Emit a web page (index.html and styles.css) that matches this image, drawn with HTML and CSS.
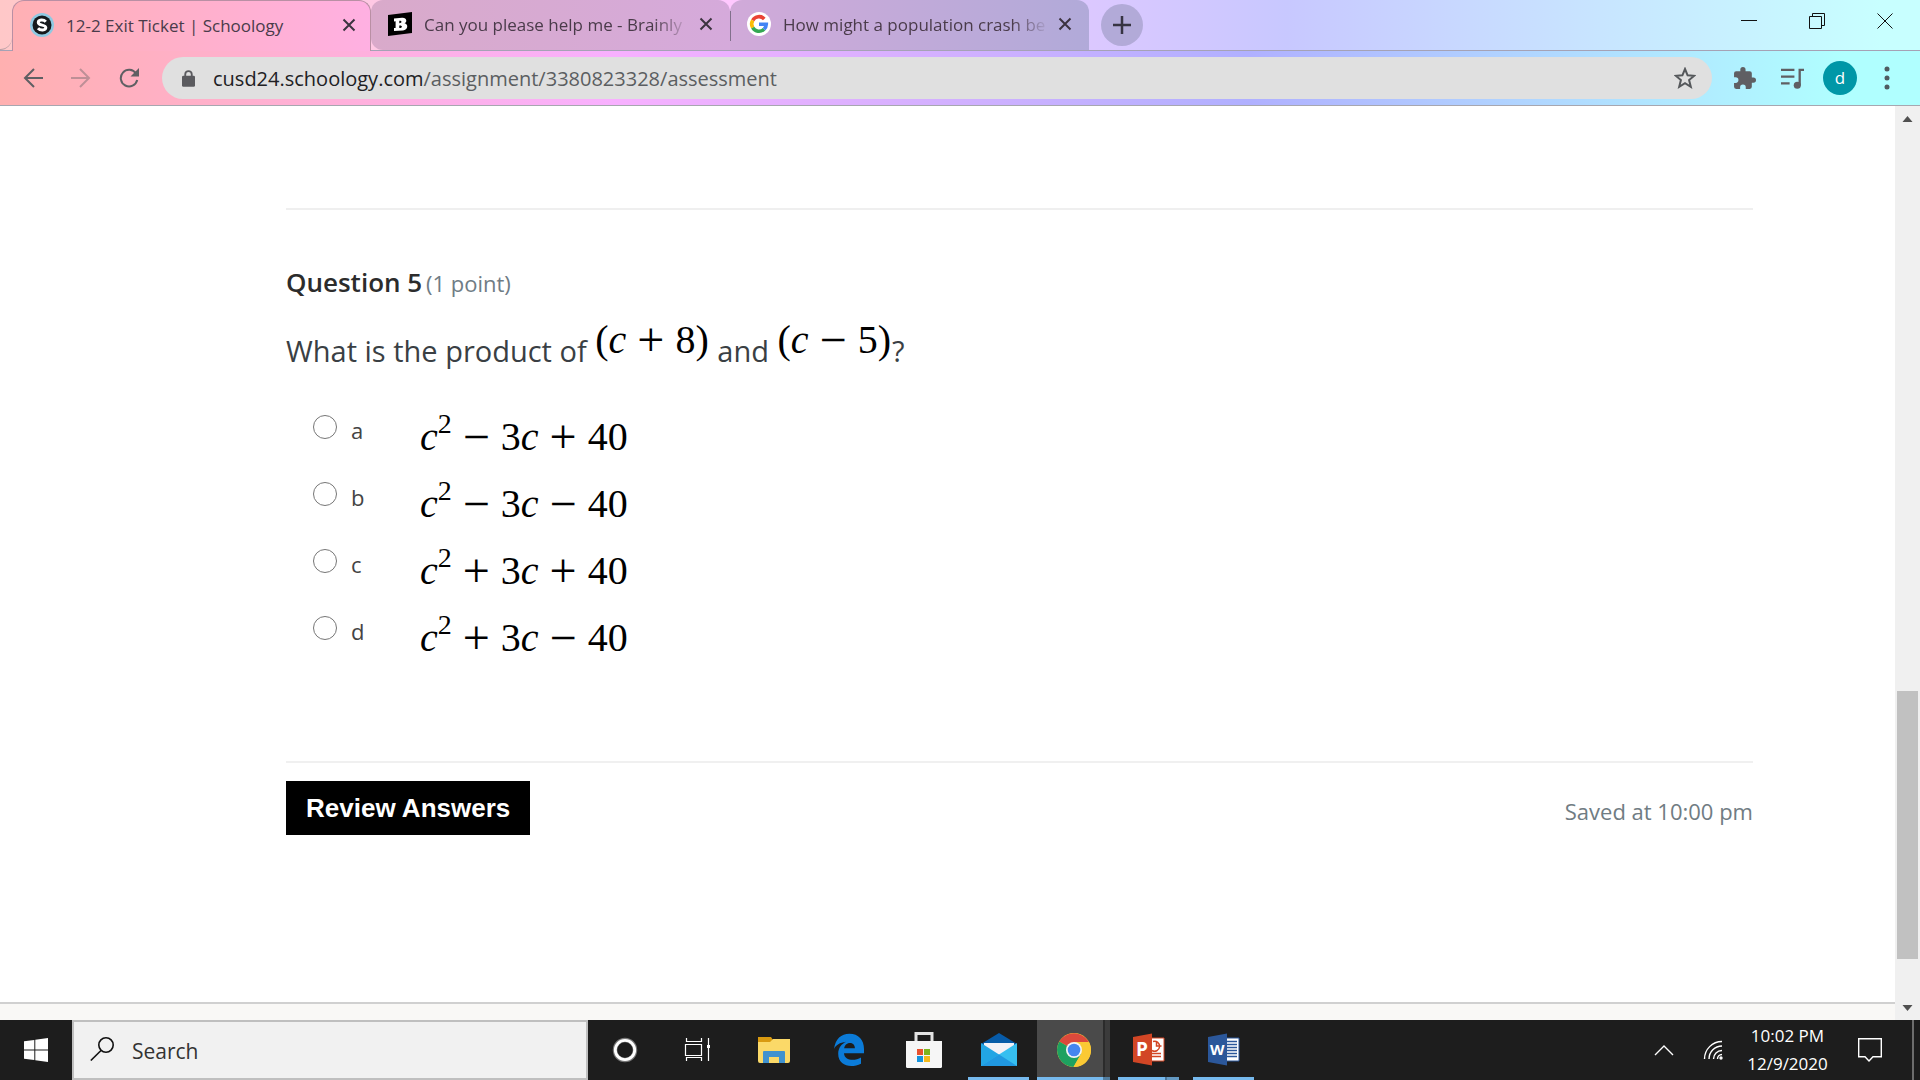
FILE: index.html
```html
<!DOCTYPE html>
<html lang="en">
<head>
<meta charset="utf-8">
<title>12-2 Exit Ticket | Schoology</title>
<link rel="stylesheet" href="styles.css">
</head>
<body>
<header class="browser">
  <div class="tab-strip">
    <div class="tab-edge"></div>
    <div class="tab tab-active">
      <svg class="favicon" viewBox="0 0 24 24"><circle cx="12" cy="12" r="12" fill="#8fc9e2"/><circle cx="12" cy="12" r="9.5" fill="#15191c"/><path d="M15.8 8.7C13.5 6.2 8.3 6.6 8.3 9.5c0 3.5 7.5 1.700 7.500 5.100 0 3-5.400 3.300-7.800.7" fill="none" stroke="#fff" stroke-width="3"/></svg>
      <span class="tab-title">12-2 Exit Ticket | Schoology</span>
      <button class="tab-close" aria-label="Close tab"><svg viewBox="0 0 14 14"><path d="M1.500 1.500l11 11m0-11l-11 11"/></svg></button>
    </div>
    <div class="tab tab-second">
      <svg class="favicon" viewBox="0 0 24 24"><path d="M0 3L24 0v21L0 24z" fill="#000"/><path fill-rule="evenodd" fill="#fff" d="M6 6.500l8-.8c5-.4 5.500 4.500 2.500 5.600 4.200.8 3.500 6.700-1.500 7.100l-9 .7v-3l1.600-.2V9.300L6 9.500zm5.300 2.300v2.400c2.700.1 3.200-2.700 0-2.400zm0 4.600v2.700c3.500 0 3.500-3 0-2.700z"/></svg>
      <span class="tab-title tab-fade">Can you please help me - Brainly</span>
      <button class="tab-close" aria-label="Close tab"><svg viewBox="0 0 14 14"><path d="M1.500 1.500l11 11m0-11l-11 11"/></svg></button>
    </div>
    <div class="tab tab-third">
      <svg class="favicon" viewBox="0 0 24 24"><circle cx="12" cy="12" r="12" fill="#fff"/><g fill="none" stroke-width="3.600"><path d="M17.300 6.900A7.300 7.300 0 0 0 5.700 8.300" stroke="#ea4335"/><path d="M5.700 8.300a7.300 7.300 0 0 0 0 7.400" stroke="#fbbc05"/><path d="M5.700 15.700a7.300 7.300 0 0 0 11.300 1.600" stroke="#34a853"/><path d="M17 17.300a7.300 7.300 0 0 0 2.300-5.100H12" stroke="#4285f4"/></g></svg>
      <span class="tab-title tab-fade">How might a population crash be</span>
      <button class="tab-close" aria-label="Close tab"><svg viewBox="0 0 14 14"><path d="M1.500 1.500l11 11m0-11l-11 11"/></svg></button>
    </div>
    <button class="new-tab" aria-label="New tab"><svg viewBox="0 0 18 18"><path d="M9 0v18M0 9h18"/></svg></button>
    <div class="window-controls">
      <button aria-label="Minimize"><svg viewBox="0 0 16 16"><path d="M0 7.500h16"/></svg></button>
      <button aria-label="Restore"><svg viewBox="0 0 16 16"><path d="M.5 3.500h12v12H.5zM3.500 3.500v-3h12v12h-3"/></svg></button>
      <button aria-label="Close"><svg viewBox="0 0 16 16"><path d="M.5.5l15 15m0-15l-15 15"/></svg></button>
    </div>
  </div>
  <div class="toolbar">
    <button class="nav" aria-label="Back"><svg viewBox="0 0 20 20"><path d="M20 10H2M11 1l-9 9 9 9"/></svg></button>
    <button class="nav nav-off" aria-label="Forward"><svg viewBox="0 0 20 20"><path d="M0 10h18M9 1l9 9-9 9"/></svg></button>
    <button class="nav" aria-label="Reload"><svg viewBox="0 0 20 20"><path d="M17 5.500A8.300 8.300 0 1 0 18.200 12"/><path d="M20 0v8.500h-8.500z" fill="#5f5f63" stroke="none"/></svg></button>
    <div class="omnibox">
      <svg class="lock" viewBox="0 0 14 18"><rect y="6" width="14" height="12" rx="1.500" fill="#5b5b5f"/><path d="M3.500 7V4.500a3.500 3.500 0 0 1 7 0V7" fill="none" stroke="#5b5b5f" stroke-width="2"/></svg>
      <a class="url" href="#question">cusd24.schoology.com<span>/assignment/3380823328/assessment</span></a>
      <button class="star" aria-label="Bookmark this page"><svg viewBox="0 0 22 22"><path d="M11 2l2.600 6.300 6.600.5-5.100 4.300 1.700 6.700-5.800-3.600-5.800 3.600 1.700-6.700-5.100-4.300 6.600-.5z"/></svg></button>
    </div>
    <button class="tool" aria-label="Extensions"><svg viewBox="1 1 22 22"><path fill="#5f5f63" d="M20.500 11H19V7a2 2 0 0 0-2-2h-4V3.500a2.500 2.500 0 0 0-5 0V5H4a2 2 0 0 0-2 2v3.800h1.500a2.700 2.700 0 0 1 0 5.400H2V20a2 2 0 0 0 2 2h3.800v-1.500a2.700 2.700 0 0 1 5.400 0V22H17a2 2 0 0 0 2-2v-4h1.500a2.500 2.500 0 0 0 0-5z"/></svg></button>
    <button class="tool" aria-label="Media controls"><svg viewBox="0 0 24 24"><path d="M0 3h14M0 10h14M0 17h9M24 3h-4.500v16" fill="none" stroke="#5f5f63" stroke-width="2.400"/><circle cx="17" cy="19" r="3.700" fill="#5f5f63"/></svg></button>
    <button class="avatar" aria-label="Profile">d</button>
    <button class="dots" aria-label="Menu"><svg viewBox="0 0 6 24"><circle cx="3" cy="3" r="2.500"/><circle cx="3" cy="12" r="2.500"/><circle cx="3" cy="21" r="2.500"/></svg></button>
  </div>
</header>

<div class="viewport">
  <main class="page">
    <form class="quiz" id="question">
      <section class="question">
        <h1>Question 5 <small>(1 point)</small></h1>
        <p class="prompt">What is the product of <span class="math raised">(<i>c</i><span class="op">+</span>8)</span> and <span class="math raised">(<i>c</i><span class="op">−</span>5)</span>?</p>
        <div class="choices">
          <label class="choice"><input type="radio" name="answer"><span class="letter">a</span><span class="math"><i>c</i><sup>2</sup><span class="op">−</span>3<i>c</i><span class="op">+</span>40</span></label>
          <label class="choice"><input type="radio" name="answer"><span class="letter">b</span><span class="math"><i>c</i><sup>2</sup><span class="op">−</span>3<i>c</i><span class="op">−</span>40</span></label>
          <label class="choice"><input type="radio" name="answer"><span class="letter">c</span><span class="math"><i>c</i><sup>2</sup><span class="op">+</span>3<i>c</i><span class="op">+</span>40</span></label>
          <label class="choice"><input type="radio" name="answer"><span class="letter">d</span><span class="math"><i>c</i><sup>2</sup><span class="op">+</span>3<i>c</i><span class="op">−</span>40</span></label>
        </div>
      </section>
      <footer class="actions">
        <button type="button" class="review">Review Answers</button>
        <span class="saved">Saved at 10:00 pm</span>
      </footer>
    </form>
    <div class="page-end"></div>
  </main>
  <div class="scrollbar">
    <svg viewBox="0 0 10 6"><path d="M0 6l5-6 5 6z"/></svg>
    <div class="track"><div class="thumb"></div></div>
    <svg viewBox="0 0 10 6"><path d="M0 0l5 6 5-6z"/></svg>
  </div>
</div>

<nav class="taskbar">
  <button class="start" aria-label="Start"><svg viewBox="0 0 24 24" fill="#fff"><path d="M0 3.200L10.300 2v9.500H0zM11.300 1.800L24 0v11.500H11.300zM0 12.500h10.300V22L0 20.800zM11.300 12.500H24V24l-12.700-1.800z"/></svg></button>
  <label class="search">
    <svg viewBox="0 0 24 24"><circle cx="16" cy="8" r="7.200"/><path d="M11 13.500L.8 23.500"/></svg>
    <input type="text" placeholder="Search" aria-label="Search">
  </label>
  <button class="task cortana" aria-label="Cortana"><svg viewBox="0 0 36 36"><circle cx="18" cy="18" r="10" fill="none" stroke="#777" stroke-width="4.500"/><circle cx="18" cy="18" r="9.700" fill="none" stroke="#fff" stroke-width="2.800"/></svg></button>
  <button class="task" aria-label="Task view"><svg viewBox="0 0 36 36"><path d="M5.500 6v3.500h15V6M4.500 12.500h16v11h-16zM5.500 29v-3.500h15V29M27.500 6v23" fill="none" stroke="#fff" stroke-width="1.200"/><path d="M26 13h3v3h-3z" fill="#fff"/></svg></button>
  <button class="task" aria-label="File Explorer"><svg viewBox="0 0 36 36"><path d="M2 5h13l2 3v4H2z" fill="#d99a10"/><path d="M2 10h12l3-3h17v22a2 2 0 0 1-2 2H4a2 2 0 0 1-2-2z" fill="#fbd968"/><path d="M7 31V20a1 1 0 0 1 1-1h20a1 1 0 0 1 1 1v11h-6v-6H13v6z" fill="#4092cf"/></svg></button>
  <button class="task" aria-label="Edge"><svg viewBox="0 0 36 36"><path fill="#0b7bd8" d="M3 17C4.500 7 10 1.800 18.500 1.800 27.500 1.800 33 8 33 17v4.300H13c.3 7.500 10.800 8 17 4.200v6.200c-10.200 5-22.800 2-22.800-10 0-6 3.500-10 8-12C8.500 10.500 5 13 3 17zm10.200-.7h10.700c0-7.300-9.700-6.900-10.700 0z"/></svg></button>
  <button class="task" aria-label="Store"><svg viewBox="0 0 36 36"><path d="M10 12V1.500h16V12" fill="none" stroke="#e4e4e4" stroke-width="3"/><path d="M0 9h36v25.500a1.500 1.500 0 0 1-1.500 1.500h-33A1.500 1.500 0 0 1 0 34.500z" fill="#f6f6f6"/><path d="M11 17h6v6h-6z" fill="#e8512d"/><path d="M18 17h6v6h-6z" fill="#7db51c"/><path d="M11 24h6v6h-6z" fill="#1593dc"/><path d="M18 24h6v6h-6z" fill="#f4ba1c"/></svg></button>
  <button class="task running" aria-label="Mail"><svg viewBox="0 0 36 36"><path d="M0 12L18 1l18 11v8H0z" fill="#075ba8"/><path d="M3 11h30v9L18 25 3 20z" fill="#f2f1f7"/><path d="M0 11l36 23H0z" fill="#22a5e4"/><path d="M36 11v23H0z" fill="#36bff0"/><path d="M18 22.500L36 34H0z" fill="#2098e0"/></svg></button>
  <button class="task running current" aria-label="Chrome"><svg viewBox="0 0 36 36"><circle cx="18" cy="18" r="17" fill="#fbc934"/><path d="M18 18L3.300 9.500A17 17 0 0 1 32.700 10z" fill="#dc493c"/><path d="M18 18L3.300 9.500A17 17 0 0 0 17.500 35l7.500-13z" fill="#1ea160"/><path d="M18 10h15a17 17 0 0 1-15.500 25L25 22z" fill="#fbc934"/><circle cx="18" cy="18" r="8" fill="#f4f4f4"/><circle cx="18" cy="18" r="6.300" fill="#4586ef"/></svg></button>
  <button class="task running grouped" aria-label="PowerPoint"><svg viewBox="0 0 36 36"><path d="M20 6h13v23H20z" fill="#fff" stroke="#d24625"/><path d="M22 9.500a5 5 0 1 1-1 9M25.500 9v5h5M21 21.500h9M21 24.500h9" fill="none" stroke="#d24625" stroke-width="1.500"/><path d="M2 5l19-3.500v32L2 30z" fill="#d24625"/><text x="5" y="24" class="badge">P</text></svg></button>
  <button class="task running" aria-label="Word"><svg viewBox="0 0 36 36"><path d="M20 6h13v23H20z" fill="#fff" stroke="#2b579a"/><path d="M21 9.500h10M21 12.500h10M21 15.500h10M21 18.500h10M21 21.500h10M21 24.500h10" stroke="#2b579a" stroke-width="1.500"/><path d="M2 5l19-3.500v32L2 30z" fill="#2b579a"/><text x="4" y="23" class="badge badge-small">W</text></svg></button>
  <div class="tray">
    <button aria-label="Show hidden icons"><svg viewBox="0 0 24 24"><path d="M3 17l9-9 9 9"/></svg></button>
    <button aria-label="Network"><svg viewBox="0 0 24 24"><path d="M3.500 21A17.500 17.500 0 0 1 21 3.500M8 21A13 13 0 0 1 21 8M12.500 21a8.500 8.500 0 0 1 8.500-8.500M16.500 21a4.500 4.500 0 0 1 4.500-4.500"/><circle cx="20" cy="20" r="1" fill="#fff"/></svg></button>
    <time class="clock">10:02 PM<br>12/9/2020</time>
    <button aria-label="Notifications"><svg viewBox="0 0 24 24"><path d="M.7.7h22.600v18H15l-4 4.300-4-4.300H.7z"/></svg></button>
  </div>
  <div class="peek"></div>
</nav>
</body>
</html>
```
FILE: styles.css
```css
* { box-sizing: border-box; }
body {
  margin: 0;
  height: 100vh;
  display: flex;
  flex-direction: column;
  overflow: hidden;
  background: #fff;
  color: #333;
  font-family: "Open Sans", "Noto Sans", sans-serif;
}
button { margin: 0; padding: 0; border: 0; background: none; font: inherit; color: inherit; }
svg { display: block; flex: none; }

/* Browser frame */
.browser { flex: none; border-bottom: 1px solid #a7a7b0; }
.tab-strip {
  display: flex;
  height: 51px;
  background: linear-gradient(90deg, #ffc8c8, #ffc8ff 38%, #c8c8ff 67%, #c8ffff 98%);
  border-bottom: 1px solid #a5a2b5;
}
.tab-edge {
  width: 12px;
  border-bottom: 1px solid #b79ea4;
  border-radius: 0 0 12px 0;
}
.tab {
  display: flex;
  align-items: center;
  width: 359px;
  padding: 0 12px 2px 17px;
  font-size: 17px;
  color: #4a3b4a;
}
.tab-active {
  height: 51px;
  padding-right: 9px;
  border: 1px solid #b98fa4;
  border-bottom: 0;
  border-radius: 12px 12px 0 0;
  background: linear-gradient(90deg, #ffb0b4, #ffb0e2);
}
.tab-second { border-radius: 12px 12px 0 12px; background: linear-gradient(90deg, #d9aaca, #d5aadb); }
.tab-third { border-radius: 12px 12px 0 0; background: linear-gradient(90deg, #d1aad9, #b1aad9); position: relative; }
.tab-third::before { content: ""; position: absolute; left: 0; top: 11px; height: 30px; border-left: 1px solid #81708c; }
.favicon { width: 24px; height: 24px; }
.tab-title { flex: 1; min-width: 0; margin: 0 4px 0 12px; overflow: hidden; white-space: nowrap; }
.tab-fade { -webkit-mask-image: linear-gradient(90deg, #000 86%, transparent); mask-image: linear-gradient(90deg, #000 86%, transparent); }
.tab-close { width: 24px; height: 24px; padding: 5px; }
.tab-close svg { width: 14px; height: 14px; stroke: #3c3340; stroke-width: 2; }
.new-tab { width: 42px; height: 42px; margin: 4px 0 0 12px; padding: 12px; border-radius: 50%; background: #b2aad8; }
.new-tab svg { width: 18px; height: 18px; stroke: #373442; stroke-width: 2.5; }
.window-controls { display: flex; margin-left: auto; padding-right: 1px; height: 42px; }
.window-controls button { display: flex; align-items: center; justify-content: center; width: 68px; }
.window-controls svg { width: 16px; height: 16px; fill: none; stroke: #111; }

.toolbar {
  display: flex;
  align-items: center;
  height: 54px;
  padding: 0 21px 0 9px;
  background: linear-gradient(90deg, #ffb0b0, #ffb0e0 20%, #f8b0ff 32%, #b0b0ff 65%, #b0ffff 96%);
}
.nav { display: flex; align-items: center; justify-content: center; width: 48px; height: 48px; }
.nav svg { width: 20px; height: 20px; fill: none; stroke: #5f5f63; stroke-width: 2; }
.nav-off { opacity: 0.4; }
.omnibox {
  flex: 1;
  display: flex;
  align-items: center;
  height: 42px;
  margin: 0 14px 0 9px;
  padding: 0 16px 0 20px;
  border-radius: 21px;
  background: #e0e0e0;
}
.lock { width: 13px; height: 17px; }
.url { flex: 1; margin-left: 18px; font-size: 20px; color: #202124; text-decoration: none; }
.url span { color: #5b5e61; }
.star svg { width: 22px; height: 22px; fill: none; stroke: #55585b; stroke-width: 2; }
.tool { display: flex; align-items: center; justify-content: center; width: 36px; height: 36px; margin-right: 12px; }
.tool svg { width: 23px; height: 23px; }
.avatar { width: 34px; height: 34px; margin-left: 1px; border-radius: 50%; background: #0097a7; color: #fff; font-size: 17px; line-height: 34px; }
.dots { width: 24px; height: 24px; margin-left: 18px; }
.dots svg { width: 6px; height: 24px; margin: auto; fill: #4f5b60; }

/* Page */
.viewport { flex: 1; display: flex; min-height: 0; }
.page { flex: 1; display: flex; flex-direction: column; min-width: 0; }
.quiz { flex: 1; margin: 0 142px 0 286px; padding-top: 102px; }
.question { border-top: 2px solid #efefef; padding-top: 54px; }
.question h1 { margin: 0; font-size: 26px; line-height: 36px; font-weight: 600; color: #2c2c2c; }
.question small { font-size: 22px; font-weight: 400; color: #6f7c85; margin-left: -3px; }
.prompt { margin: 20px 0 0; font-size: 29px; line-height: 60px; color: #3a3f44; }
.math { font-family: "Liberation Serif", serif; font-size: 40px; line-height: 50px; color: #000; white-space: nowrap; }
.math sup { font-size: 28px; line-height: 0; vertical-align: 17px; }
.raised { position: relative; top: -9px; margin: 0 1px; }
.op { font-size: 48px; line-height: 0; margin: 0 11px; vertical-align: -3px; }
.choices { padding: 26px 0 0 27px; }
.choice { display: grid; grid-template-columns: 38px 69px auto; align-items: start; height: 67px; }
.choice input {
  appearance: none;
  width: 24px;
  height: 24px;
  margin: 8px 0 0;
  border: 1px solid #767676;
  border-radius: 50%;
  background: #fff;
}
.letter { font-size: 22px; line-height: 30px; padding-top: 8px; color: #444; }
.choice .math { padding-top: 5px; }
.actions {
  display: flex;
  justify-content: space-between;
  align-items: start;
  margin-top: 86px;
  padding-top: 18px;
  border-top: 2px solid #f0f0f0;
}
.review { height: 54px; padding: 0 20px; background: #000; color: #fff; font: bold 26px "Liberation Sans", sans-serif; }
.saved { font-size: 22px; line-height: 30px; padding-top: 15px; color: #707c83; }
.page-end { height: 18px; border-top: 2px solid #d0d0d0; background: #f9f8f6; }
.scrollbar { width: 25px; padding: 10px 2px 9px; display: flex; flex-direction: column; align-items: center; background: #f0f0f0; }
.scrollbar svg { width: 11px; height: 6px; fill: #505050; }
.track { flex: 1; width: 100%; display: flex; flex-direction: column; justify-content: flex-end; padding-bottom: 46px; }
.thumb { height: 32%; background: #c1c1c1; }

/* Taskbar */
.taskbar { flex: none; display: flex; height: 60px; background: #1d1d1d; color: #fff; }
.start { width: 72px; padding: 0 24px; }
.start svg { width: 24px; height: 24px; }
.search { display: flex; align-items: center; width: 516px; padding: 2px 16px 0; border: 2px solid #bfbfbf; background: #f1f1f1; }
.search svg { width: 24px; height: 24px; margin-bottom: 4px; fill: none; stroke: #111; stroke-width: 1.6; }
.search input { flex: 1; min-width: 0; margin-left: 18px; padding: 0; border: 0; outline: 0; background: none; font: 21px "Open Sans", sans-serif; color: #333; }
.search input::placeholder { color: #333; opacity: 1; }
.task { display: flex; align-items: center; justify-content: center; width: 75px; position: relative; }
.cortana { width: 73px; }
.task svg { width: 36px; height: 36px; }
.running::after { content: ""; position: absolute; left: 7px; right: 7px; bottom: 0; height: 3px; background: #76b9ed; }
.current { background: linear-gradient(90deg, transparent 1px, #4a4a4a 1px, #4a4a4a 67px, #2b2b2b 67px, #2b2b2b 69px, #3b3b3b 69px, #3b3b3b 74px, transparent 74px); }
.current::after { left: 1px; right: 1px; background: linear-gradient(90deg, #76b9ed 66px, #527d9e 66px); }
.grouped::after { background: linear-gradient(90deg, #76b9ed 47px, #4a7699 47px, #4a7699 49px, #6399c2 49px); }
.badge { font: bold 19px "Open Sans", sans-serif; fill: #fff; }
.badge-small { font-size: 15px; }
.tray { display: flex; align-items: center; margin-left: auto; }
.tray button { width: 49px; }
.tray svg { width: 24px; height: 24px; margin: auto; fill: none; stroke: #fff; stroke-width: 1.4; }
.clock { width: 101px; font-size: 17px; line-height: 28px; text-align: center; }
.tray button:last-child { margin-left: 7px; }
.peek { width: 8px; margin-left: 18px; border-left: 2px solid #6d6d6d; }
```
